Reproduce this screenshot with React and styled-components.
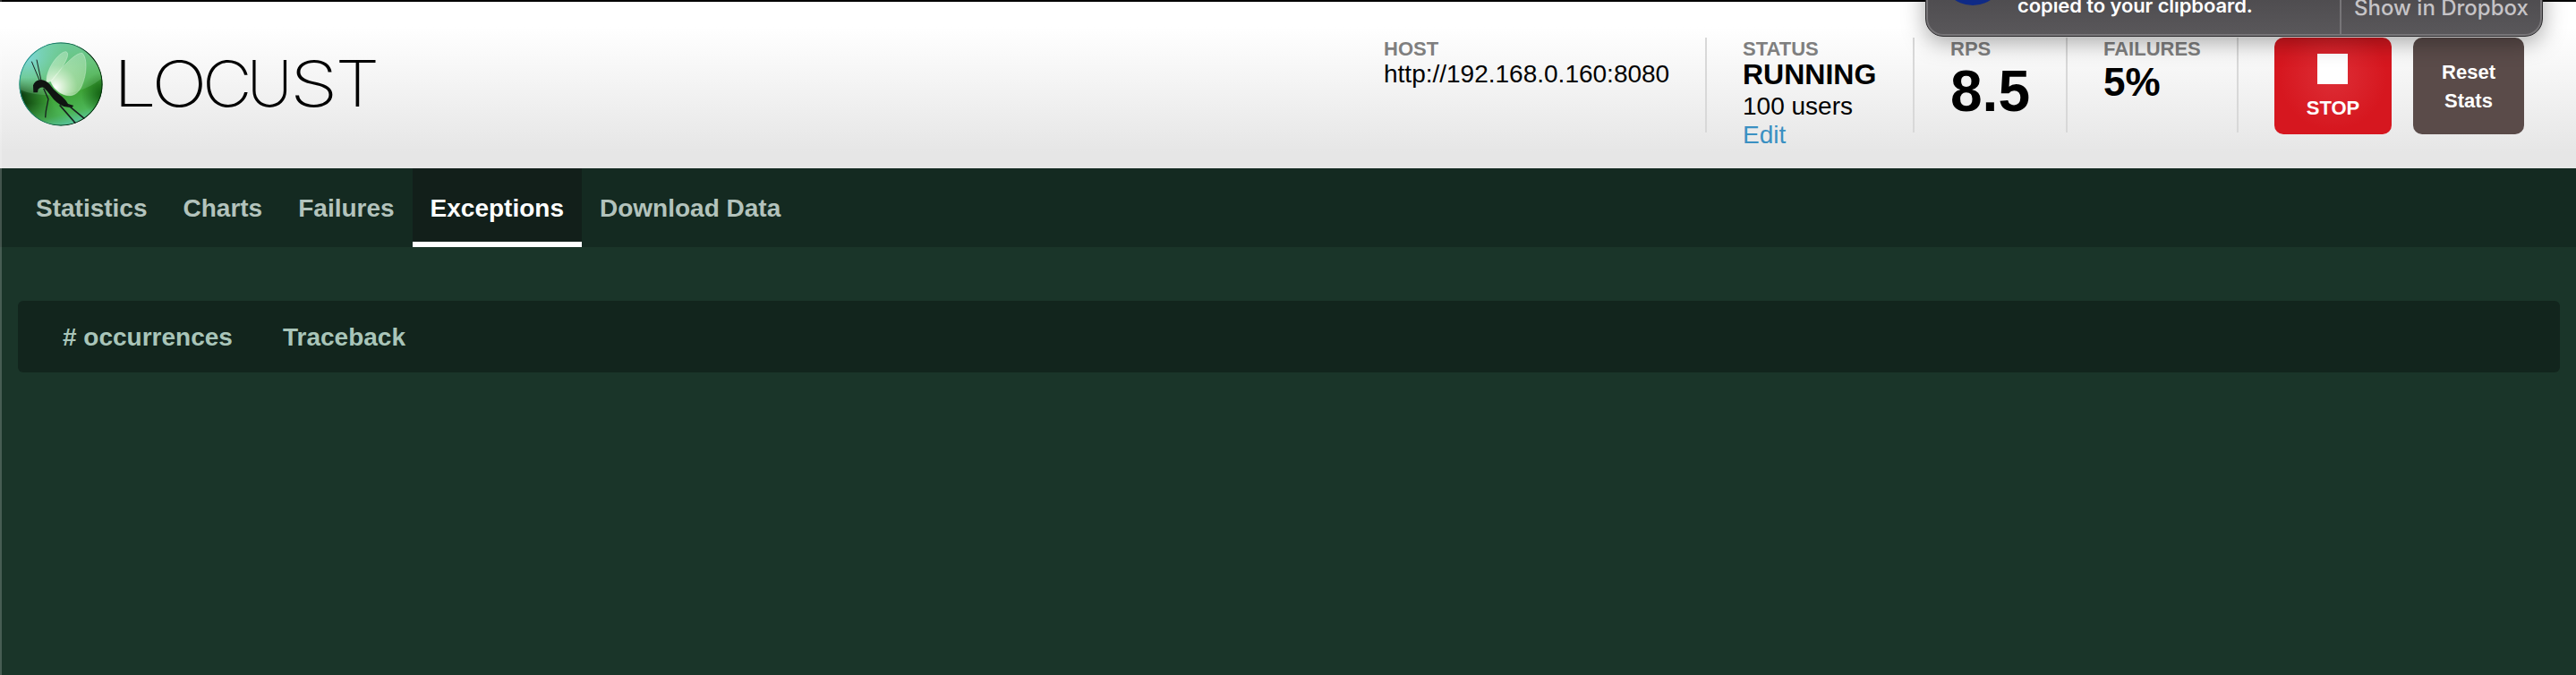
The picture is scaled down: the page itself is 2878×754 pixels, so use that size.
import React from 'react';
import styled, { createGlobalStyle } from 'styled-components';

const Global = createGlobalStyle`
  *{box-sizing:border-box}
  html,body{margin:0;height:100%;overflow:hidden}
  body{background:#1a3529;font-family:"Liberation Sans",Arial,sans-serif;}
`;
const Page = styled.div`position:relative;height:754px;width:2878px;overflow:hidden;background:#1a3529;`;
const Edge = styled.div`position:absolute;left:0;top:0;bottom:0;width:2px;background:rgba(255,255,255,.2);`;
const Header = styled.header`
  display:flex;justify-content:space-between;height:188px;border-top:2px solid #000;
  background:linear-gradient(#fff 0,#fff 28px,#e6e6e6 168px,#e6e6e6 100%);
`;
const LogoSvg = styled.svg`display:block;width:440px;height:186px;`;
const Wordmark = styled.text`font-family:Inter,sans-serif;font-weight:200;font-size:71px;fill:#000;`;
const Stats = styled.div`display:flex;align-items:flex-start;padding:40px 58px 0 0;`;
const Box = styled.div`
  width:${p => p.$w}px;height:106px;padding-left:${p => (p.$first ? 41 : 40)}px;color:#000;
  border-left:${p => (p.$first ? '0' : '2px solid #d8d8d8')};white-space:nowrap;
`;
const Label = styled.div`font-size:22px;line-height:26px;margin-bottom:-1px;font-weight:700;color:#7f7f7f;`;
const Value = styled.div`
  font-weight:${p => (p.$b ? 700 : 400)};font-size:${p => p.$s || 28}px;
  line-height:${p => p.$lh}px;color:${p => p.$c || '#000'};
`;
const Button = styled.button`
  border:0;border-radius:10px;height:108px;width:${p => p.$w}px;margin-left:${p => p.$ml}px;padding:${p => p.$pt}px 0 0;
  display:flex;flex-direction:column;align-items:center;justify-content:flex-start;
  background:${p => p.$bg};color:#fff;font:700 22px/32px "Liberation Sans",Arial,sans-serif;
`;
const Square = styled.span`width:34px;height:34px;background:#fff;margin:0 1px 11px 0;flex:none;`;
const Rule = styled.div`width:2px;height:106px;background:#d8d8d8;`;
const Nav = styled.nav`display:flex;height:88px;background:#142a21;padding-left:20px;`;
const Tab = styled.a`
  padding:28px 20px 0;font-size:28px;line-height:34px;font-weight:700;color:${p => (p.$on ? '#fff' : '#b3c3bc')};
  background:${p => (p.$on ? '#121f1a' : 'none')};border-bottom:${p => (p.$on ? '6px solid #fff' : '0')};
`;
const Table = styled.div`
  display:flex;margin:60px 18px 0 20px;height:80px;border-radius:6px;background:#12251d;padding-left:50px;
  color:#a9c5b9;font-size:28px;font-weight:700;line-height:82px;
`;
const Cell = styled.div`width:${p => p.$w}px;`;
const Toast = styled.div`
  position:absolute;left:2151px;top:-60px;width:690px;height:101px;border-radius:20px;
  display:flex;align-items:flex-end;background:linear-gradient(#4f4d50 60%,#5a585b);border:1px solid #2d2c2e;
  box-shadow:inset 0 0 0 2px #777578,0 6px 26px rgba(0,0,0,.35);overflow:hidden;white-space:nowrap;
  font-family:Inter,sans-serif;font-weight:500;
`;
const AppBadge = styled.div`width:72px;height:72px;border-radius:50%;background:#0f2a86;margin:0 14px 34px 16px;flex:none;`;
const Message = styled.div`width:360px;flex:none;font-size:22px;line-height:26px;color:#fff;padding-bottom:21px;font-weight:600;letter-spacing:-.1px;`;
const Action = styled.div`
  height:97px;margin-bottom:2px;border-left:2px solid #777578;padding:0 0 15px 14px;
  display:flex;align-items:flex-end;font-size:24px;line-height:28px;color:#c6c4c7;
`;

function Logo() {
  return (
    <LogoSvg viewBox="0 2 440 186">
      <defs>
        <linearGradient id="ball" x1="0.35" y1="0" x2="0.6" y2="1">
          <stop offset="0" stopColor="#62c49c" />
          <stop offset=".35" stopColor="#58b96a" />
          <stop offset=".62" stopColor="#3ea336" />
          <stop offset=".85" stopColor="#4cb556" />
          <stop offset="1" stopColor="#5cc8a8" />
        </linearGradient>
        <radialGradient id="shade" cx="0.72" cy="0.62" r="0.72">
          <stop offset=".45" stopColor="#063b08" stopOpacity="0" />
          <stop offset="1" stopColor="#032c06" stopOpacity=".95" />
        </radialGradient>
        <linearGradient id="shadeFade" x1="0" y1="0" x2="0" y2="1">
          <stop offset=".42" stopColor="#000" />
          <stop offset=".6" stopColor="#fff" />
          <stop offset=".72" stopColor="#fff" />
          <stop offset=".95" stopColor="#222" />
        </linearGradient>
        <mask id="lower"><rect x="30" y="30" width="290" height="290" fill="url(#shadeFade)" /></mask>
        <radialGradient id="sky" cx="0.1" cy="0.18" r="0.45">
          <stop offset="0" stopColor="#7fd8e2" stopOpacity=".9" />
          <stop offset="1" stopColor="#7fd8b0" stopOpacity="0" />
        </radialGradient>
        <radialGradient id="right" cx="1" cy="0.62" r="0.26">
          <stop offset="0" stopColor="#064d05" stopOpacity=".85" />
          <stop offset="1" stopColor="#064d05" stopOpacity="0" />
        </radialGradient>
        <radialGradient id="glow" gradientUnits="userSpaceOnUse" cx="155" cy="185" r="125">
          <stop offset="0" stopColor="#fff" />
          <stop offset=".25" stopColor="#effbe9" stopOpacity=".8" />
          <stop offset=".6" stopColor="#d6f4d0" stopOpacity=".5" />
          <stop offset="1" stopColor="#d6f4d4" stopOpacity=".38" />
        </radialGradient>
        <linearGradient id="rim" x1="0" y1="0.2" x2="1" y2="0.5">
          <stop offset="0" stopColor="#2b9a98" />
          <stop offset=".55" stopColor="#1b6a50" />
          <stop offset=".8" stopColor="#041a08" />
          <stop offset="1" stopColor="#063010" />
        </linearGradient>
        <clipPath id="disc"><circle cx="174" cy="174" r="140" /></clipPath>
      </defs>
      <g transform="translate(10 36) scale(.33333)">
        <g clipPath="url(#disc)">
          <circle cx="174" cy="174" r="140" fill="url(#ball)" />
          <circle cx="174" cy="174" r="140" fill="url(#shade)" mask="url(#lower)" />
          <circle cx="174" cy="174" r="140" fill="url(#right)" />
          <path d="M30 190Q95 218 175 208Q265 198 318 148V20H30Z" fill="#a6eab8" opacity=".2" />
          <circle cx="174" cy="174" r="140" fill="url(#sky)" />
          <path d="M126 168C122 128 164 68 190 65C208 68 190 110 142 164Z" fill="url(#glow)" stroke="#dff7e2" strokeOpacity=".4" strokeWidth="3" />
          <path d="M140 164C180 116 222 68 246 70C263 86 262 140 244 180C230 212 206 217 184 209C162 200 148 186 140 164Z" fill="url(#glow)" stroke="#dff7e2" strokeOpacity=".4" strokeWidth="3" />
          <path d="M82 202L81 178Q86 162 106 159Q124 160 136 174Q148 192 166 206Q190 224 198 240L217 246L210 253L184 249Q156 236 140 212Q128 196 117 186Q108 182 98 191L96 202Z" fill="#101512" />
          <g fill="none" stroke="#18211f">
            <path d="M104 165L76 98M108 162L93 92" strokeWidth="3" />
            <path d="M116 188L132 224L124 264L122 286" strokeWidth="4" />
            <path d="M170 244L224 306M198 244L256 292" strokeWidth="5" />
          </g>
          <circle cx="174" cy="174" r="138.5" fill="none" stroke="url(#rim)" strokeWidth="4" />
        </g>
      </g>
      <Wordmark y="119">
        <tspan x="126.4" textLength="48.4" lengthAdjust="spacingAndGlyphs">L</tspan>
        <tspan x="169.6" textLength="61.9" lengthAdjust="spacingAndGlyphs">O</tspan>
        <tspan x="225.9" textLength="55.6" lengthAdjust="spacingAndGlyphs">C</tspan>
        <tspan x="275.7" textLength="50.9" lengthAdjust="spacingAndGlyphs">U</tspan>
        <tspan x="324" textLength="53.4" lengthAdjust="spacingAndGlyphs">S</tspan>
        <tspan x="374.7" textLength="49.3" lengthAdjust="spacingAndGlyphs">T</tspan>
      </Wordmark>
    </LogoSvg>
  );
}

export default function App() {
  return (
    <Page>
      <Global />
      <Header>
        <Logo />
        <Stats>
          <Box $w={400} $first><Label>HOST</Label><Value $lh={32}>http://192.168.0.160:8080</Value></Box>
          <Box $w={232}>
            <Label>STATUS</Label>
            <Value $b $s={32} $lh={32}>RUNNING</Value>
            <Value $lh={40}>100 users</Value>
            <Value $lh={24} $c="#3a90c2">Edit</Value>
          </Box>
          <Box $w={171}><Label>RPS</Label><Value $b $s={64} $lh={70}>8.5</Value></Box>
          <Box $w={191}><Label>FAILURES</Label><Value $b $s={44} $lh={50}>5%</Value></Box>
          <Rule />
          <Button $w={131} $ml={40} $pt={18} $bg="radial-gradient(circle at 50% 40%,#dd2e36,#d6171f 60px)"><Square />STOP</Button>
          <Button $w={124} $ml={24} $pt={23} $bg="#5a4b49"><span>Reset</span><span>Stats</span></Button>
        </Stats>
      </Header>
      <Nav>
        <Tab>Statistics</Tab><Tab>Charts</Tab><Tab>Failures</Tab><Tab $on>Exceptions</Tab><Tab>Download Data</Tab>
      </Nav>
      <Table><Cell $w={246}># occurrences</Cell><Cell $w={400}>Traceback</Cell></Table>
      <Toast>
        <AppBadge />
        <Message>copied to your clipboard.</Message>
        <Action>Show in Dropbox</Action>
      </Toast>
      <Edge />
    </Page>
  );
}
